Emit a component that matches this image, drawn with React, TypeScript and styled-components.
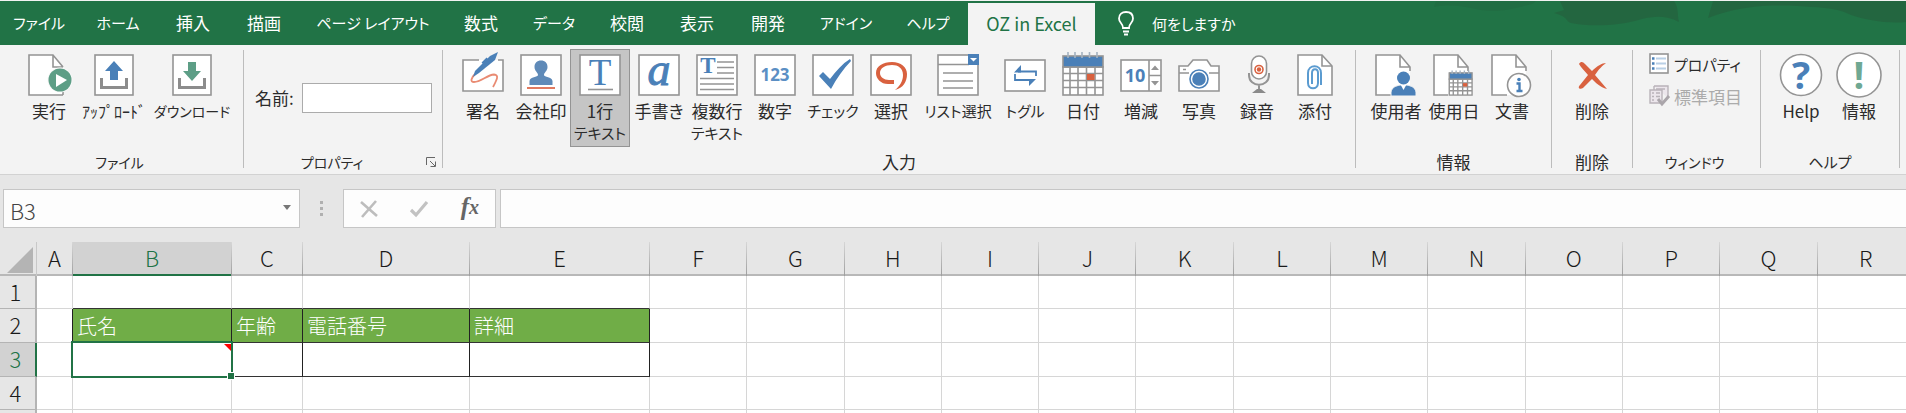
import React from "react";
import styled, { createGlobalStyle, css } from "styled-components";

const GREEN = "#217346";
const BLUE = "#4a80b8";
const TEAL = "#5d9e86";
const RED = "#d9613f";
const GRAY = "#949494";

const GlobalStyle = createGlobalStyle`
  *, *::before, *::after { box-sizing: border-box; }
  body {
    margin: 0;
    background: #e6e6e6;
    color: #2b2b2b;
    font-family: "Noto Sans CJK JP", "Noto Sans", sans-serif;
    font-size: 17px;
    font-feature-settings: "palt";
  }
  button, input {
    font: inherit;
    font-feature-settings: inherit;
    color: inherit;
    margin: 0;
    padding: 0;
    border: 0;
    border-radius: 0;
    background: none;
  }
  svg { overflow: visible; }
`;

const Window = styled.div`
  display: flex;
  flex-direction: column;
  height: 100vh;
  overflow: hidden;
`;

/* ---------- tab strip ---------- */

const TabStrip = styled.nav`
  position: relative;
  flex: none;
  display: flex;
  height: 45px;
  border-top: 1px solid #f3f3f3;
  background: ${GREEN};
  color: #fff;
`;

const Backdrop = styled.svg`
  position: absolute;
  top: 0;
  right: 0;
`;

const Tab = styled.button<{ $width: number; $active?: boolean; $kana?: boolean }>`
  flex: none;
  width: ${(p) => p.$width}px;
  font-size: ${(p) => (p.$kana ? 15 : 17)}px;
  line-height: 22px;
  white-space: nowrap;
  ${(p) =>
    p.$active &&
    css`
      margin-top: 2px;
      padding-bottom: 2px;
      background: #f3f3f3;
      color: ${GREEN};
      font-size: 18px;
    `}
`;

const TellMe = styled.button`
  display: flex;
  align-items: center;
  gap: 17px;
  margin-left: 22px;
  font-size: 15px;
  white-space: nowrap;
`;

/* ---------- ribbon ---------- */

const Ribbon = styled.div`
  flex: none;
  display: flex;
  height: 130px;
  border-bottom: 1px solid #d2d2d2;
  background: #f3f3f3;
`;

const Group = styled.section<{ $width: number; $inset?: number }>`
  position: relative;
  flex: none;
  display: flex;
  flex-direction: column;
  width: ${(p) => p.$width}px;
  padding-top: 4px;

  > div {
    flex: 1;
    display: flex;
    padding-left: ${(p) => p.$inset ?? 11}px;
  }
`;

const GroupTitle = styled.h2<{ $size?: number; $end?: number }>`
  margin: 0;
  padding-right: ${(p) => p.$end ?? 0}px;
  font-size: ${(p) => p.$size ?? 17}px;
  font-weight: 400;
  line-height: 24px;
  text-align: center;
`;

const Divider = styled.span`
  flex: none;
  width: 1px;
  margin: 5px 0 6px;
  background: #bcbcbc;
`;

const Command = styled.button<{ $width?: number; $pressed?: boolean; $size?: number }>`
  flex: none;
  display: flex;
  flex-direction: column;
  align-items: center;
  width: ${(p) => p.$width ?? 58}px;
  height: 98px;
  border: 1px solid ${(p) => (p.$pressed ? "#949494" : "transparent")};
  background: ${(p) => (p.$pressed ? "#c5c5c5" : "transparent")};
  padding-top: 1px;
  font-size: ${(p) => p.$size ?? 17}px;
  line-height: 22px;
  white-space: pre;

  svg {
    flex: none;
    margin-bottom: 1px;
  }
`;

const SecondLine = styled.span`
  font-size: 15px;
`;

const HalfWidth = styled.span`
  font-size: 16px;
  font-feature-settings: normal;
`;

const NameField = styled.label`
  display: flex;
  align-items: center;
  gap: 8px;
  height: 97px;

  input {
    width: 130px;
    height: 30px;
    border: 1px solid #ababab;
    background: #fff;
  }
`;

const Launcher = styled.button`
  position: absolute;
  right: 5px;
  bottom: 6px;
  width: 12px;
  height: 12px;

  svg { display: block; }
`;

const CommandList = styled.div`
  display: flex;
  flex-direction: column;
  gap: 2px;
`;

const SmallCommand = styled.button<{ $kana?: boolean }>`
  display: flex;
  align-items: center;
  gap: 5px;
  height: 30px;
  font-size: ${(p) => (p.$kana ? 15 : 17)}px;
  white-space: nowrap;

  &:disabled { color: #ababab; }
`;

/* ---------- formula bar ---------- */

const FormulaBar = styled.div`
  flex: none;
  display: flex;
  padding: 14px 0 14px 3px;
`;

const Box = styled.div<{ $width?: number }>`
  flex: ${(p) => (p.$width ? "none" : "1")};
  display: flex;
  align-items: center;
  width: ${(p) => (p.$width ? p.$width + "px" : "auto")};
  height: 39px;
  border: 1px solid #c6c6c6;
  border-right-width: ${(p) => (p.$width ? 1 : 0)}px;
  background: #fdfdfd;
  font-weight: 300;

  input {
    flex: 1;
    min-width: 0;
    height: 37px;
    padding: 2px 6px 0;
    font-size: 22px;
    color: #444;
  }
`;

const NameArrow = styled.button`
  width: 24px;
  height: 37px;
  padding-bottom: 3px;

  &::after {
    content: "";
    display: block;
    width: 8px;
    margin: 0 auto;
    border: 4px solid transparent;
    border-top: 5px solid #777;
    border-bottom: 0;
  }
`;

const Grip = styled.span`
  flex: none;
  width: 43px;
  display: flex;
  flex-direction: column;
  align-items: center;
  justify-content: center;
  gap: 3px;

  i {
    width: 3px;
    height: 3px;
    background: #b0b0b0;
  }
`;

const Tools = styled(Box)`
  margin-right: 4px;
  justify-content: space-around;
`;

const ToolButton = styled.button`
  width: 50px;
  height: 37px;
  display: flex;
  align-items: center;
  justify-content: center;
`;

const Fx = styled(ToolButton)`
  padding-bottom: 3px;
  color: #666;
  font: italic 700 25px "Liberation Serif", serif;

  small { font-size: 20px; }
`;

/* ---------- sheet ---------- */

const Sheet = styled.div`
  flex: 1;
  min-height: 0;
  overflow: hidden;
`;

const Grid = styled.table`
  width: calc(100% + 9px);
  table-layout: fixed;
  border-collapse: separate;
  border-spacing: 0;
  background: #fff;
  font-weight: 300;
`;

const Col = styled.col<{ $width?: number }>`
  width: ${(p) => (p.$width ? p.$width + "px" : "auto")};
`;

const ColumnHead = styled.th<{ $selected?: boolean }>`
  height: 34px;
  padding: 0 0 5px;
  border-right: 1px solid;
  border-image: linear-gradient(#d8d8d8, #9c9c9c) 1;
  background: ${(p) => (p.$selected ? "#d2d2d2" : "#e6e6e6")};
  box-shadow: inset 0 -2px 0 ${(p) => (p.$selected ? GREEN : "#b8b8b8")};
  color: ${(p) => (p.$selected ? GREEN : "#1a1a1a")};
  font-size: 22px;
  font-weight: 300;
  line-height: 28px;
`;

const Corner = styled.td`
  padding: 0 3px 3px 6px;
  border-right: 1px solid #c8c8c8;
  background: #e6e6e6;
  box-shadow: inset 0 -2px 0 #b8b8b8;
  vertical-align: bottom;

  svg { display: block; margin-left: auto; }
`;

const RowHead = styled.th<{ $selected?: boolean }>`
  padding: 0 4px 3px 0;
  border-right: ${(p) => (p.$selected ? `2px solid ${GREEN}` : "2px solid #b4b4b4")};
  border-bottom: 1px solid #b4b4b4;
  background: ${(p) => (p.$selected ? "#d2d2d2" : "#e6e6e6")};
  color: ${(p) => (p.$selected ? GREEN : "#1a1a1a")};
  font-size: 22px;
  font-weight: 300;
  line-height: 28px;
`;

const Row = styled.tr<{ $height: number }>`
  height: ${(p) => p.$height}px;
`;

const Cell = styled.td<{ $right?: boolean; $bottom?: boolean; $fill?: boolean }>`
  position: relative;
  padding: 0 4px;
  border-right: 1px solid ${(p) => (p.$right ? "#222" : "#d6d6d6")};
  border-bottom: 1px solid ${(p) => (p.$bottom ? "#333" : "#d6d6d6")};
  background: ${(p) => (p.$fill ? "#70ad47" : "#fff")};
  color: #fff;
  font-size: 20px;
  line-height: 30px;
  font-feature-settings: normal;
  white-space: nowrap;
`;

const Selection = styled.span`
  position: absolute;
  z-index: 1;
  inset: -2px;
  border: 2px solid ${GREEN};

  &::before {
    content: "";
    position: absolute;
    top: 1px;
    right: 0;
    border-top: 7px solid #f00;
    border-left: 7px solid transparent;
  }

  &::after {
    content: "";
    position: absolute;
    right: -3px;
    bottom: -3px;
    width: 6px;
    height: 6px;
    background: ${GREEN};
    outline: 1px solid #fff;
  }
`;

/* ---------- icons ---------- */

const Icon = ({ children }: { children: React.ReactNode }) => (
  <svg width="48" height="48" viewBox="0 0 48 48" fill="none" stroke={GRAY} strokeWidth="1.6" aria-hidden="true">
    {children}
  </svg>
);

const Frame = () => <rect x="4" y="4" width="40" height="40" fill="#fff" />;
const WideFrame = () => <rect x="4" y="9" width="40" height="31" fill="#fff" />;

const CutPage = () => (
  <>
    <path d="M4 4H29L38 17V44H4Z" fill="#fff" stroke="none" />
    <path d="M19 44H4V4H28L38 16V20M28 4V16H38" />
  </>
);

const RunIcon = () => (
  <Icon>
    <path d="M4 4H29L38 17V44H4Z" fill="#fff" stroke="none" />
    <path d="M38 44H4V4H28L38 16M28 4V16H38M38 41V44" />
    <circle cx="35" cy="29" r="12.500" fill="#f8f8f8" stroke="none" />
    <circle cx="35" cy="29" r="11.500" fill={TEAL} stroke="none" />
    <path d="M31 23L42 29L31 36Z" fill="#fff" stroke="none" />
  </Icon>
);

const UploadIcon = () => (
  <Icon>
    <rect x="5" y="4" width="38" height="40" fill="#fff" />
    <path d="M11.500 27V36.500H36.500V27" stroke="#8c8c8c" strokeWidth="3" />
    <path d="M24 10L33 20H28V29H20V20H15Z" fill={BLUE} stroke="none" />
  </Icon>
);

const DownloadIcon = () => (
  <Icon>
    <rect x="5" y="4" width="38" height="40" fill="#fff" />
    <path d="M11.500 27V36.500H36.500V27" stroke="#8c8c8c" strokeWidth="3" />
    <path d="M24 30L33 20H28V11H20V20H15Z" fill={TEAL} stroke="none" />
  </Icon>
);

const SignIcon = () => (
  <Icon>
    <rect x="4" y="9" width="40" height="31" fill="#fff" stroke="none" />
    <path d="M20 9H4V40H44V9H39" />
    <path d="M16 23C12 27 11 31 15 31C22 31 28 24 35 23.500C41 24 37 30 34 36" stroke="#e98b73" strokeWidth="1.800" />
    <path d="M14 26L16 20L31 5L39 1L36 9L20 22Z" fill={BLUE} stroke="none" />
    <path d="M29 8L24 13" stroke={BLUE} strokeWidth="4" />
  </Icon>
);

const StampIcon = () => (
  <Icon>
    <Frame />
    <path
      d="M24 9.500C28 9.500 30.500 12 30.500 16C30.500 20 27 21.500 27 24C27 26.500 35 25.500 35.500 30V34H12.500V30C13 25.500 21 26.500 21 24C21 21.500 17.500 20 17.500 16C17.500 12 20 9.500 24 9.500Z"
      fill="#5f8ab8"
      stroke="none"
    />
    <path d="M10 37H38" stroke="#e07a60" strokeWidth="2" />
  </Icon>
);

const TextIcon = () => (
  <Icon>
    <Frame />
    <text x="24" y="34" fontFamily="Liberation Serif" fontSize="37" textAnchor="middle" fill={BLUE} stroke="none">T</text>
    <path d="M12 38.500H37" />
  </Icon>
);

const HandwritingIcon = () => (
  <Icon>
    <Frame />
    <text x="24" y="34" fontFamily="Liberation Serif" fontSize="46" fontStyle="italic" textAnchor="middle" fill={BLUE} stroke={BLUE} strokeWidth="1">a</text>
  </Icon>
);

const ParagraphIcon = () => (
  <Icon>
    <Frame />
    <text x="15" y="22" fontFamily="Liberation Serif" fontSize="23" fontWeight="700" textAnchor="middle" fill={BLUE} stroke="none">T</text>
    <path d="M24 11H41M24 16.500H41M24 22H41M7 27.500H41M7 33H41M7 38.500H41" />
  </Icon>
);

const NumberIcon = () => (
  <Icon>
    <Frame />
    <text x="24" y="30" fontFamily="Open Sans" fontSize="17" fontWeight="700" textAnchor="middle" fill="#5b8fc4" stroke="none">123</text>
  </Icon>
);

const CheckIcon = () => (
  <Icon>
    <Frame />
    <path d="M10 25L14 21L21 28C27 20 33 13 41 8L42 10C34 18 28 27 22 38Z" fill={BLUE} stroke="none" />
  </Icon>
);

const SelectIcon = () => (
  <Icon>
    <Frame />
    <path
      d="M27 29V33H21C14 33 9 28 9 22C9 15 16 11 25 11C34 11 40 16 40 23C40 31 36 37 28 39C33 35 36 30 36 24C36 17 31 14 25 14C18 14 13 17 13 22C13 26 17 29 22 29Z"
      fill={RED}
      stroke="none"
    />
  </Icon>
);

const ListIcon = () => (
  <Icon>
    <Frame />
    <path d="M4 13.500H35M9 22H39M9 30H39M9 37H39" />
    <rect x="34" y="3" width="11" height="11" fill={BLUE} stroke="none" />
    <path d="M36 7H43L39.500 10.500Z" fill="#fff" stroke="none" />
  </Icon>
);

const ToggleIcon = () => (
  <Icon>
    <WideFrame />
    <path d="M35 25V20.500H17M14 23V29H31" stroke={BLUE} strokeWidth="1.800" />
    <path d="M13 21.400L20 14V21.400ZM35 28L28 35V28Z" fill={BLUE} stroke="none" />
  </Icon>
);

const CalendarShape = () => (
  <>
    <rect x="4" y="16" width="40" height="28" fill="#fff" />
    <rect x="4" y="5" width="40" height="11" fill={BLUE} />
    <path d="M4 22.500H44M4 29.500H44M4 36.500H44M11 16V44M19 16V44M27.500 16V44M36 16V44" />
    <path d="M9 1V7M16 1V7M23 1V7M30.500 1V7M38 1V7" stroke="#a4b2c0" />
    <rect x="28" y="23" width="7.500" height="6" fill={RED} stroke="none" />
  </>
);

const CalendarIcon = () => (
  <Icon>
    <CalendarShape />
  </Icon>
);

const SpinnerIcon = () => (
  <Icon>
    <WideFrame />
    <path d="M32 9V40M32 24.500H44" />
    <path d="M34 19L38 14.500L42 19ZM34 30L38 34.500L42 30Z" fill={GRAY} stroke="none" />
    <text x="18" y="31" fontFamily="Open Sans" fontSize="18" fontWeight="700" textAnchor="middle" fill={BLUE} stroke="none">10</text>
  </Icon>
);

const CameraIcon = () => (
  <Icon>
    <path d="M4 40V15H13L18 9H32L36 15H44V40Z" fill="#fff" />
    <path d="M4 22H14M34 22H44M8 18.500H11" />
    <circle cx="24" cy="28" r="9" stroke={BLUE} fill="#fff" />
    <circle cx="24" cy="28" r="6" fill={BLUE} stroke={BLUE} />
  </Icon>
);

const MicIcon = () => (
  <Icon>
    <rect x="18.500" y="5" width="15" height="23" rx="7.500" fill="#fff" />
    <circle cx="26" cy="18.500" r="4" stroke={RED} />
    <circle cx="26" cy="18.500" r="2.200" fill={RED} stroke="none" />
    <path d="M16 22V24C16 37 36 37 36 24V22M26 34V40" strokeWidth="2" />
    <path d="M19 42L24 38H28L33 42Z" fill="#8a8a8a" stroke="none" />
  </Icon>
);

const AttachIcon = () => (
  <Icon>
    <path d="M7 4H31L41 15V44H7Z" fill="#fff" />
    <path d="M31 4V15H41" />
    <path
      d="M30 34V22C30 13 17 13 17 22V32C17 39 27 39 27 32V22C27 17 21 17 21 22V33"
      stroke="#5b9bd0"
      strokeWidth="2"
    />
  </Icon>
);

const UserIcon = () => (
  <Icon>
    <CutPage />
    <path d="M19 45V41C20 36 24 35 28 34H35C39 35 43 36 44 41V45Z" fill={BLUE} stroke="#f3f3f3" strokeWidth="1" />
    <path d="M28.500 33.500H34.500L31.500 39Z" fill="#fff" stroke="none" />
    <circle cx="31.500" cy="27" r="6.500" fill={BLUE} stroke="none" />
  </Icon>
);

const UseDateIcon = () => (
  <Icon>
    <CutPage />
    <rect x="18" y="22" width="25" height="23" fill="#f3f3f3" stroke="none" />
    <g transform="translate(17 19) scale(0.57)" strokeWidth="2.400">
      <CalendarShape />
    </g>
  </Icon>
);

const DocumentIcon = () => (
  <Icon>
    <CutPage />
    <circle cx="31" cy="34" r="11.500" fill="#fff" />
    <circle cx="31" cy="28.500" r="1.800" fill={BLUE} stroke="none" />
    <path d="M28.500 32.500H31.500V40M28.500 40H34.500" stroke={BLUE} strokeWidth="2.400" />
  </Icon>
);

const DeleteIcon = () => (
  <Icon>
    <path d="M11 13C13 10 15 11 17 13L24 20C29 15 34 12 38 12C34 15 31 18 27 24L39 38C32 36 28 32 24 28C20 32 17 35 15 37C12 39 9 37 12 34L20 24C17 20 13 17 11 13Z" fill={RED} stroke="none" />
  </Icon>
);

const HelpIcon = () => (
  <Icon>
    <circle cx="24" cy="24" r="20.500" fill="#fff" />
    <text x="24" y="38" fontFamily="Open Sans" fontSize="38" fontWeight="700" textAnchor="middle" fill={BLUE} stroke="none">?</text>
  </Icon>
);

const AboutIcon = () => (
  <Icon>
    <circle cx="24" cy="24" r="22" fill="#fff" />
    <text x="24" y="38" fontFamily="Open Sans" fontSize="38" fontWeight="700" textAnchor="middle" fill="#6fa893" stroke="none">!</text>
  </Icon>
);

const PropertyListIcon = () => (
  <svg width="20" height="22" viewBox="0 0 20 22" fill="none" aria-hidden="true">
    <rect x="1" y="1" width="18" height="19" fill="#fff" stroke={GRAY} strokeWidth="1.600" />
    <path d="M7 5.500H17M7 10.500H17M7 15.500H17" stroke="#b9d0e6" strokeWidth="2" />
    <path d="M3 5.500H5.500M3 10.500H5.500M3 15.500H5.500" stroke={BLUE} strokeWidth="2.500" />
  </svg>
);

const StandardIcon = () => (
  <svg width="20" height="22" viewBox="0 0 20 22" fill="none" stroke="#b9b3b9" strokeWidth="1.400" aria-hidden="true">
    <path d="M5 1H19V13M5 1V5M1 5H13V18H1Z" fill="#ece6ec" />
    <path d="M3 8H5M7 8H11M3 11.500H5M7 11.500H11M3 15H5M7 4H16" />
    <path d="M9 14L13 19L20 11" stroke="#aaa5aa" strokeWidth="3" />
  </svg>
);

/* ---------- content ---------- */

type TabInfo = { label: string; width: number; kana?: boolean; active?: boolean };

const tabs: TabInfo[] = [
  { label: "ファイル", width: 78, kana: true },
  { label: "ホーム", width: 80, kana: true },
  { label: "挿入", width: 70 },
  { label: "描画", width: 72 },
  { label: "ページ レイアウト", width: 146, kana: true },
  { label: "数式", width: 70 },
  { label: "データ", width: 76, kana: true },
  { label: "校閲", width: 70 },
  { label: "表示", width: 70 },
  { label: "開発", width: 72 },
  { label: "アドイン", width: 84, kana: true },
  { label: "ヘルプ", width: 80, kana: true },
  { label: "OZ in Excel", width: 127, active: true },
];

const columns = "ABCDEFGHIJKLMNOPQR".split("");
const fixedWidths = [36, 159, 71, 167, 180];
const rowHeights = [33, 34, 34, 33];
const headings: Record<string, string> = { B: "氏名", C: "年齢", D: "電話番号", E: "詳細" };

export default function App() {
  return (
    <Window>
      <GlobalStyle />
      <TabStrip>
        <Backdrop width="480" height="44" viewBox="0 0 480 44" fill="#23653f" aria-hidden="true">
          <path d="M8 6L10 0H110L106 3C86 8 73 12 55 9C38 5 23 3 8 6Z" opacity=".4" />
          <path d="M128 12L138 9L134 0H248C253 7 251 13 253 21C240 14 228 15 216 18C194 25 164 26 145 22C139 20 143 16 128 12Z" opacity=".9" />
          <path d="M282 17L287 0H480V21C462 23 440 19 425 14C406 5 391 7 372 5C344 4 316 4 282 17Z" opacity=".9" />
        </Backdrop>
        {tabs.map((t) => (
          <Tab key={t.label} $width={t.width} $kana={t.kana} $active={t.active}>
            {t.label}
          </Tab>
        ))}
        <TellMe>
          <svg width="18" height="26" viewBox="0 0 18 26" fill="none" stroke="#fff" strokeWidth="1.800" aria-hidden="true">
            <path d="M6 18C6 13 2 13 2 8.500C2 4 5 2 9 2S16 4 16 8.500C16 13 12 13 12 18ZM6 21.500H12M7 24.500H11" />
          </svg>
          何をしますか
        </TellMe>
      </TabStrip>

      <Ribbon>
        <Group $width={243} $inset={19}>
          <div>
            <Command $width={60}><RunIcon />実行</Command>
            <Command $width={70}><UploadIcon /><HalfWidth>ｱｯﾌﾟﾛｰﾄﾞ</HalfWidth></Command>
            <Command $width={86} $size={14}><DownloadIcon />ダウンロード</Command>
          </div>
          <GroupTitle $size={14} $end={4}>ファイル</GroupTitle>
        </Group>
        <Divider />
        <Group $width={198}>
          <div>
            <NameField>
              名前:
              <input type="text" />
            </NameField>
          </div>
          <GroupTitle $size={14} $end={22}>プロパティ</GroupTitle>
          <Launcher aria-label="プロパティ">
            <svg width="12" height="12" viewBox="0 0 12 12" fill="none" stroke="#666" aria-hidden="true">
              <path d="M1.500 9V1.500H10M5 5L10 10M10.500 5.500V10.500H5.500" />
            </svg>
          </Launcher>
        </Group>
        <Divider />
        <Group $width={912}>
          <div>
            <Command><SignIcon />署名</Command>
            <Command><StampIcon />会社印</Command>
            <Command $width={60} $pressed aria-pressed="true"><TextIcon />1行<SecondLine>テキスト</SecondLine></Command>
            <Command><HandwritingIcon />手書き</Command>
            <Command><ParagraphIcon />複数行<SecondLine>テキスト</SecondLine></Command>
            <Command><NumberIcon />数字</Command>
            <Command $size={15}><CheckIcon />チェック</Command>
            <Command><SelectIcon />選択</Command>
            <Command $width={76} $size={15}><ListIcon />リスト選択</Command>
            <Command $size={15}><ToggleIcon />トグル</Command>
            <Command><CalendarIcon />日付</Command>
            <Command><SpinnerIcon />増減</Command>
            <Command><CameraIcon />写真</Command>
            <Command><MicIcon />録音</Command>
            <Command><AttachIcon />添付</Command>
          </div>
          <GroupTitle>入力</GroupTitle>
        </Group>
        <Divider />
        <Group $width={195}>
          <div>
            <Command><UserIcon />使用者</Command>
            <Command><UseDateIcon />使用日</Command>
            <Command><DocumentIcon />文書</Command>
          </div>
          <GroupTitle>情報</GroupTitle>
        </Group>
        <Divider />
        <Group $width={80}>
          <div>
            <Command><DeleteIcon />削除</Command>
          </div>
          <GroupTitle>削除</GroupTitle>
        </Group>
        <Divider />
        <Group $width={127} $inset={16}>
          <div>
            <CommandList>
              <SmallCommand $kana><PropertyListIcon />プロパティ</SmallCommand>
              <SmallCommand disabled><StandardIcon />標準項目</SmallCommand>
            </CommandList>
          </div>
          <GroupTitle $size={14} $end={4}>ウィンドウ</GroupTitle>
        </Group>
        <Divider />
        <Group $width={138}>
          <div>
            <Command><HelpIcon />Help</Command>
            <Command><AboutIcon />情報</Command>
          </div>
          <GroupTitle $size={15}>ヘルプ</GroupTitle>
        </Group>
        <Divider />
      </Ribbon>

      <FormulaBar>
        <Box $width={297}>
          <input type="text" defaultValue="B3" aria-label="名前ボックス" />
          <NameArrow aria-label="名前の一覧" />
        </Box>
        <Grip><i /><i /><i /></Grip>
        <Tools $width={153}>
          <ToolButton aria-label="キャンセル">
            <svg width="18" height="18" viewBox="0 0 18 18" stroke="#bdbdbd" strokeWidth="2.600" aria-hidden="true">
              <path d="M1 2L17 16M16 1L2 17" />
            </svg>
          </ToolButton>
          <ToolButton aria-label="入力">
            <svg width="20" height="18" viewBox="0 0 20 18" fill="none" stroke="#c2c2c2" strokeWidth="3.200" aria-hidden="true">
              <path d="M2 10L7 15L18 2" />
            </svg>
          </ToolButton>
          <Fx aria-label="関数の挿入">f<small>x</small></Fx>
        </Tools>
        <Box>
          <input type="text" aria-label="数式バー" />
        </Box>
      </FormulaBar>

      <Sheet>
        <Grid>
          <colgroup>
            <Col $width={37} />
            {columns.map((c, i) => <Col key={c} $width={fixedWidths[i]} />)}
          </colgroup>
          <thead>
            <tr>
              <Corner>
                <svg width="26" height="26" viewBox="0 0 26 26" aria-hidden="true"><path d="M26 0V26H0Z" fill="#b4b4b4" /></svg>
              </Corner>
              {columns.map((c) => (
                <ColumnHead key={c} scope="col" $selected={c === "B"}>{c}</ColumnHead>
              ))}
            </tr>
          </thead>
          <tbody>
            {rowHeights.map((height, r) => {
              const row = r + 1;
              return (
                <Row key={row} $height={height}>
                  <RowHead scope="row" $selected={row === 3}>{row}</RowHead>
                  {columns.map((c, i) => {
                    const inTable = i >= 1 && i <= 4;
                    return (
                      <Cell
                        key={c}
                        $right={(row === 2 || row === 3) && i <= 4}
                        $bottom={inTable && row <= 3}
                        $fill={inTable && row === 2}
                      >
                        {row === 2 && headings[c]}
                        {row === 3 && c === "B" && <Selection />}
                      </Cell>
                    );
                  })}
                </Row>
              );
            })}
            <Row $height={3}>
              <RowHead as="td" />
              {columns.map((c) => <Cell key={c} />)}
            </Row>
          </tbody>
        </Grid>
      </Sheet>
    </Window>
  );
}
